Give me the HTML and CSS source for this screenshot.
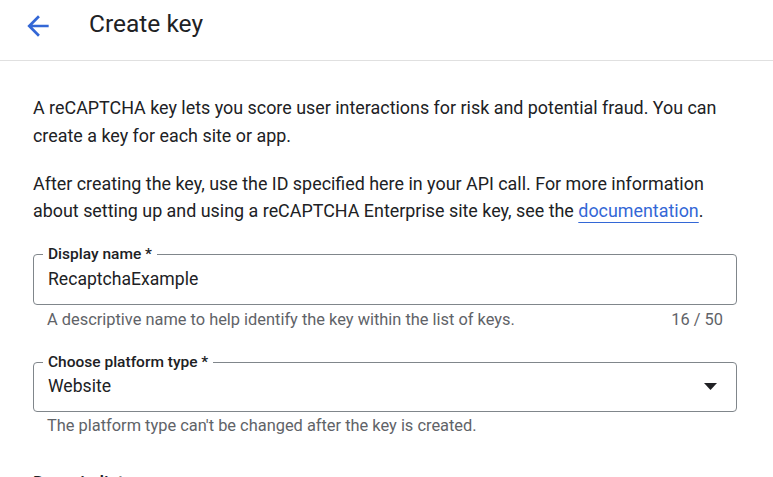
FILE: index.html
```html
<!DOCTYPE html>
<html lang="en">
<head>
<meta charset="utf-8">
<title>Create key</title>
<link rel="stylesheet" href="styles.css">
</head>
<body>
<header class="topbar">
  <button class="back" aria-label="Back">
    <svg width="32" height="32" viewBox="0 0 24 24"><path d="M20 11H7.83l5.59-5.59L12 4l-8 8 8 8 1.41-1.41L7.83 13H20v-2z" fill="currentColor"/></svg>
  </button>
  <h1 class="title">Create key</h1>
</header>
<main class="content">
  <p class="para">A reCAPTCHA key lets you score user interactions for risk and potential fraud. You can create a key for each site or app.</p>
  <p class="para">After creating the key, use the ID specified here in your API call. For more information about setting up and using a reCAPTCHA Enterprise site key, see the <a class="link" href="#">documentation</a>.</p>

  <div class="field">
    <fieldset class="outline">
      <legend class="label">Display name *</legend>
      <div class="value">RecaptchaExample</div>
    </fieldset>
    <div class="hint-row">
      <span class="hint">A descriptive name to help identify the key within the list of keys.</span>
      <span class="hint">16 / 50</span>
    </div>
  </div>

  <div class="field">
    <fieldset class="outline">
      <legend class="label">Choose platform type *</legend>
      <div class="value select">
        <span>Website</span>
        <svg class="caret" width="13" height="7" viewBox="0 0 13 7"><path d="M0 0h13L6.5 7z" fill="#202124"/></svg>
      </div>
    </fieldset>
    <div class="hint-row">
      <span class="hint">The platform type can't be changed after the key is created.</span>
    </div>
  </div>

  <h2 class="section">Domain list</h2>
</main>
</body>
</html>
```

FILE: styles.css
```css
* { box-sizing: border-box; }
html, body {
  margin: 0;
  padding: 0;
  background: #fff;
  overflow: hidden;
}
body {
  font-family: Roboto, "Liberation Sans", Arial, sans-serif;
  color: #202124;
  width: 773px;
  height: 477px;
}
.topbar {
  height: 61px;
  border-bottom: 1px solid #e0e0e0;
  display: flex;
  align-items: flex-start;
  padding: 10px 0 0 22px;
}
.back {
  width: 32px;
  height: 32px;
  padding: 0;
  border: 0;
  background: none;
  color: #3367d6;
  display: flex;
  align-items: center;
  justify-content: center;
  margin-top: -0.5px;
}
.back svg { display: block; }
.title {
  margin: -2px 0 0 35px;
  font-size: 24.5px;
  font-weight: 400;
  line-height: 32px;
  color: #202124;
}
.content {
  padding: 33px 36px 0 33px;
}
.para {
  margin: 0 0 20.5px;
  font-size: 17.9px;
  line-height: 27.5px;
}
.link {
  color: #3367d6;
  text-decoration: underline;
  text-decoration-thickness: 1px;
  text-underline-offset: 5px;
}
.field {
  margin-top: 12px;
}
.field + .field {
  margin-top: 8px;
}
.outline {
  margin: 0;
  padding: 0 14px;
  min-width: 0;
  border: 1px solid #80868b;
  border-radius: 4px;
}
.label {
  font-size: 15.5px;
  font-weight: 500;
  line-height: 18px;
  padding: 0 5px;
  margin-left: -5px;
  color: #202124;
}
.value {
  font-size: 17.6px;
  line-height: 30px;
  padding: 1px 0 10px;
}
.select {
  display: flex;
  align-items: center;
  justify-content: space-between;
  padding-right: 5px;
  padding-top: 0;
}
.caret { display: block; }
.hint-row {
  display: flex;
  justify-content: space-between;
  padding: 5px 14px 0;
  height: 40px;
}
.field + .field .hint-row {
  padding-top: 4px;
}
.hint {
  font-size: 16.4px;
  line-height: 20px;
  color: #5f6368;
}
.section {
  margin: 19px 0 0;
  font-size: 18px;
  font-weight: 500;
  line-height: 24px;
}
```
